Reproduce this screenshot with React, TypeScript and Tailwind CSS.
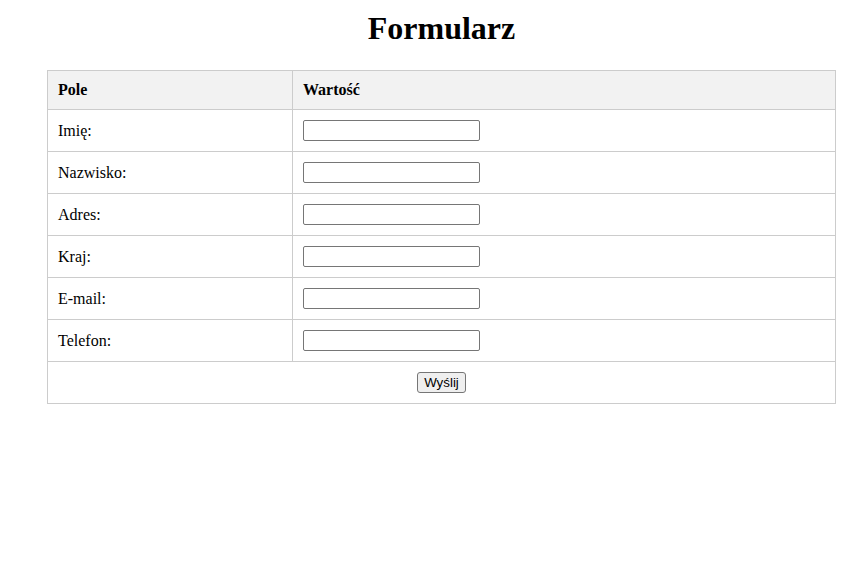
const fields = ["Imię:", "Nazwisko:", "Adres:", "Kraj:", "E-mail:", "Telefon:"]

export default function App() {
  return (
    <div className="min-h-[576px] bg-white text-black font-['Liberation_Serif',serif] text-[16px]">
      <h1 className="ml-[47px] w-[789px] pt-[10px] mb-[23px] text-center text-[32px] font-bold leading-[37px]">
        Formularz
      </h1>
      <table className="ml-[47px] w-[789px] border-collapse">
        <thead>
          <tr className="bg-[#f2f2f2]">
            <th className="w-[245px] border border-[#cccccc] px-[10px] py-[10px] text-left font-bold leading-[18px]">
              Pole
            </th>
            <th className="border border-[#cccccc] px-[10px] py-[10px] text-left font-bold leading-[18px]">
              Wartość
            </th>
          </tr>
        </thead>
        <tbody>
          {fields.map((f) => (
            <tr key={f}>
              <td className="border border-[#cccccc] px-[10px] py-[10px] leading-[21px]">{f}</td>
              <td className="border border-[#cccccc] px-[10px] py-[10px] leading-[21px]">
                <input
                  type="text"
                  className="block h-[21px] w-[177px] rounded-[2px] border border-[#767676] bg-white px-[2px] text-[13.33px] font-['Liberation_Sans',sans-serif]"
                />
              </td>
            </tr>
          ))}
          <tr>
            <td colSpan={2} className="border border-[#cccccc] px-[10px] py-[10px] text-center leading-[21px]">
              <button
                type="submit"
                className="inline-block h-[21px] align-top rounded-[3px] border border-[#767676] bg-[#efefef] px-[6px] text-[13.33px] leading-[17px] font-['Liberation_Sans',sans-serif] text-black"
              >
                Wyślij
              </button>
            </td>
          </tr>
        </tbody>
      </table>
    </div>
  )
}
